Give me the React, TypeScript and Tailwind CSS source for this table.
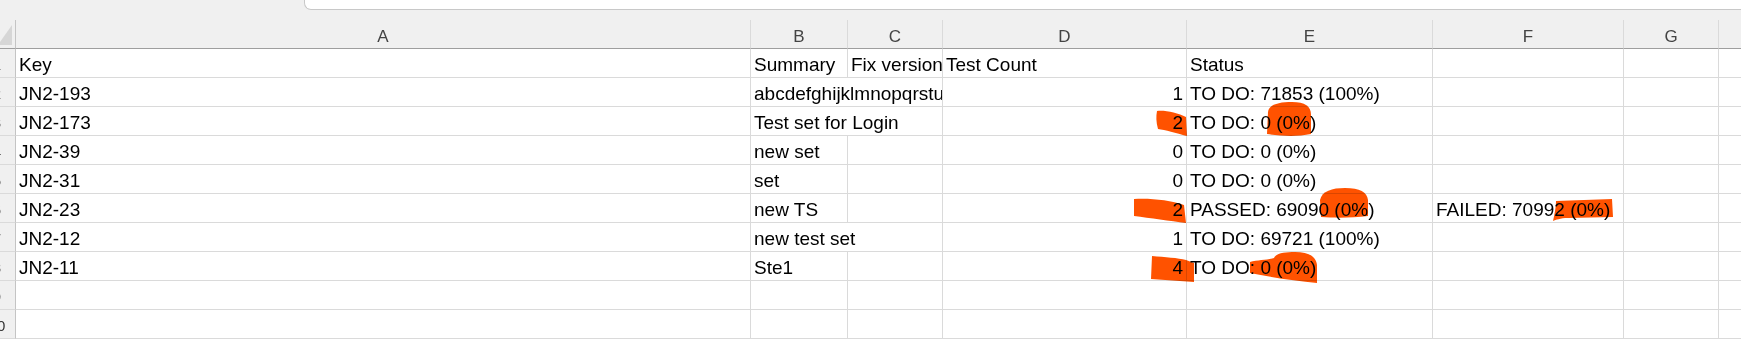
import type { ReactNode } from 'react'

const cols =
  'grid h-[29px] grid-cols-[16px_735px_97px_95px_244px_246px_191px_95px_95px]'

type Row = {
  key?: string
  summary?: string
  fix?: string
  count?: string
  status?: string
  extra?: string
  spill?: boolean
  header?: boolean
}

const rows: Row[] = [
  { key: 'Key', summary: 'Summary', fix: 'Fix version', count: 'Test Count', status: 'Status', header: true },
  { key: 'JN2-193', summary: 'abcdefghijklmnopqrstuvwxyz', count: '1', status: 'TO DO: 71853 (100%)', spill: true },
  { key: 'JN2-173', summary: 'Test set for Login', count: '2', status: 'TO DO: 0 (0%)', spill: true },
  { key: 'JN2-39', summary: 'new set', count: '0', status: 'TO DO: 0 (0%)' },
  { key: 'JN2-31', summary: 'set', count: '0', status: 'TO DO: 0 (0%)' },
  { key: 'JN2-23', summary: 'new TS', count: '2', status: 'PASSED: 69090 (0%)', extra: 'FAILED: 70992 (0%)' },
  { key: 'JN2-12', summary: 'new test set', count: '1', status: 'TO DO: 69721 (100%)', spill: true },
  { key: 'JN2-11', summary: 'Ste1', count: '4', status: 'TO DO: 0 (0%)' },
  {},
  {},
]

const letters = ['A', 'B', 'C', 'D', 'E', 'F', 'G', 'H']

function Cell({
  children,
  right = false,
  span = false,
}: {
  children?: ReactNode
  right?: boolean
  span?: boolean
}) {
  return (
    <div
      className={`flex items-end overflow-hidden whitespace-nowrap border-r border-b border-[#dadada] bg-white pb-[1px] pl-[3px] pr-[3px] leading-[22px] ${
        span ? 'col-span-2' : ''
      } ${right ? 'justify-end' : ''}`}
    >
      {children}
    </div>
  )
}

// row numbers sit mostly off screen, only the tail of "10" shows
function RowHead({ n }: { n: number }) {
  return (
    <div className="flex items-end overflow-hidden border-r border-b border-r-[#c4c4c4] border-b-[#dadada] bg-[#f0f0f0] pb-[2px] text-[15px] leading-[20px] text-[#333]">
      <div className="-ml-[20px] w-[34px] shrink-0 text-center">{n}</div>
    </div>
  )
}

export default function App() {
  return (
    <div className="relative h-[340px] w-[1741px] overflow-hidden bg-white font-['Liberation_Sans',Arial,sans-serif] text-[19px] text-black">
      <div className="flex h-[20px] bg-[#f0f0f0]">
        <div className="w-[304px] shrink-0" />
        <div className="h-[10px] flex-1 rounded-bl-[7px] border-b border-l border-[#c8c8c8] bg-white" />
      </div>

      <div className={`${cols} bg-[#f0f0f0]`}>
        <div className="border-r border-b border-r-[#c4c4c4] border-b-[#9e9e9e]">
          <svg width="15" height="28" viewBox="0 0 15 28">
            <polygon points="12,5 12,25 0,25 0,22" fill="#d6d6d6" />
          </svg>
        </div>
        {letters.map((l) => (
          <div
            key={l}
            className="flex items-end justify-center border-r border-b border-r-[#dadada] border-b-[#9e9e9e] pb-[1px] text-[17px] leading-[20px] text-[#444]"
          >
            {l}
          </div>
        ))}
      </div>

      {rows.map((r, i) => (
        <div key={i} className={cols}>
          <RowHead n={i + 1} />
          <Cell>{r.key}</Cell>
          {r.spill ? (
            <Cell span>{r.summary}</Cell>
          ) : (
            <>
              <Cell>{r.summary}</Cell>
              <Cell>{r.fix}</Cell>
            </>
          )}
          <Cell right={!r.header}>{r.count}</Cell>
          <Cell>{r.status}</Cell>
          <Cell>{r.extra}</Cell>
          <Cell />
          <Cell />
        </div>
      ))}

      {/* redaction scribbles */}
      <svg
        className="pointer-events-none absolute inset-0 mix-blend-multiply"
        width="1741"
        height="340"
        viewBox="0 0 1741 340"
      >
        <g fill="#ff5200">
          <path d="M1157,111 C1165,110 1178,113 1186,117 L1187,136 C1176,133 1165,130 1158,129 C1156,122 1156,116 1157,111 Z" />
          <path d="M1268,112 C1269,104 1280,102 1292,102 C1305,102 1311,106 1311,115 L1311,134 C1297,137 1280,136 1267,134 Z" />
          <path d="M1134,199 C1150,198 1170,200 1184,205 L1186,223 C1170,221 1150,218 1134,216 Z" />
          <path d="M1320,200 C1322,191 1332,188 1345,188 C1360,188 1367,192 1368,200 L1368,216 C1352,218 1335,218 1321,217 Z" />
          <path d="M1556,201 L1612,199 L1613,217 L1568,218 C1560,218 1556,220 1553,221 C1555,212 1556,206 1556,201 Z" />
          <path d="M1152,256 C1165,257 1178,258 1186,260 L1194,263 L1194,282 C1180,281 1165,280 1151,279 Z" />
          <path d="M1250,262 C1258,260 1268,260 1274,258 C1276,253 1285,252 1295,252 C1308,252 1316,256 1317,265 L1317,283 C1295,281 1270,277 1250,273 Z" />
        </g>
      </svg>
    </div>
  )
}
